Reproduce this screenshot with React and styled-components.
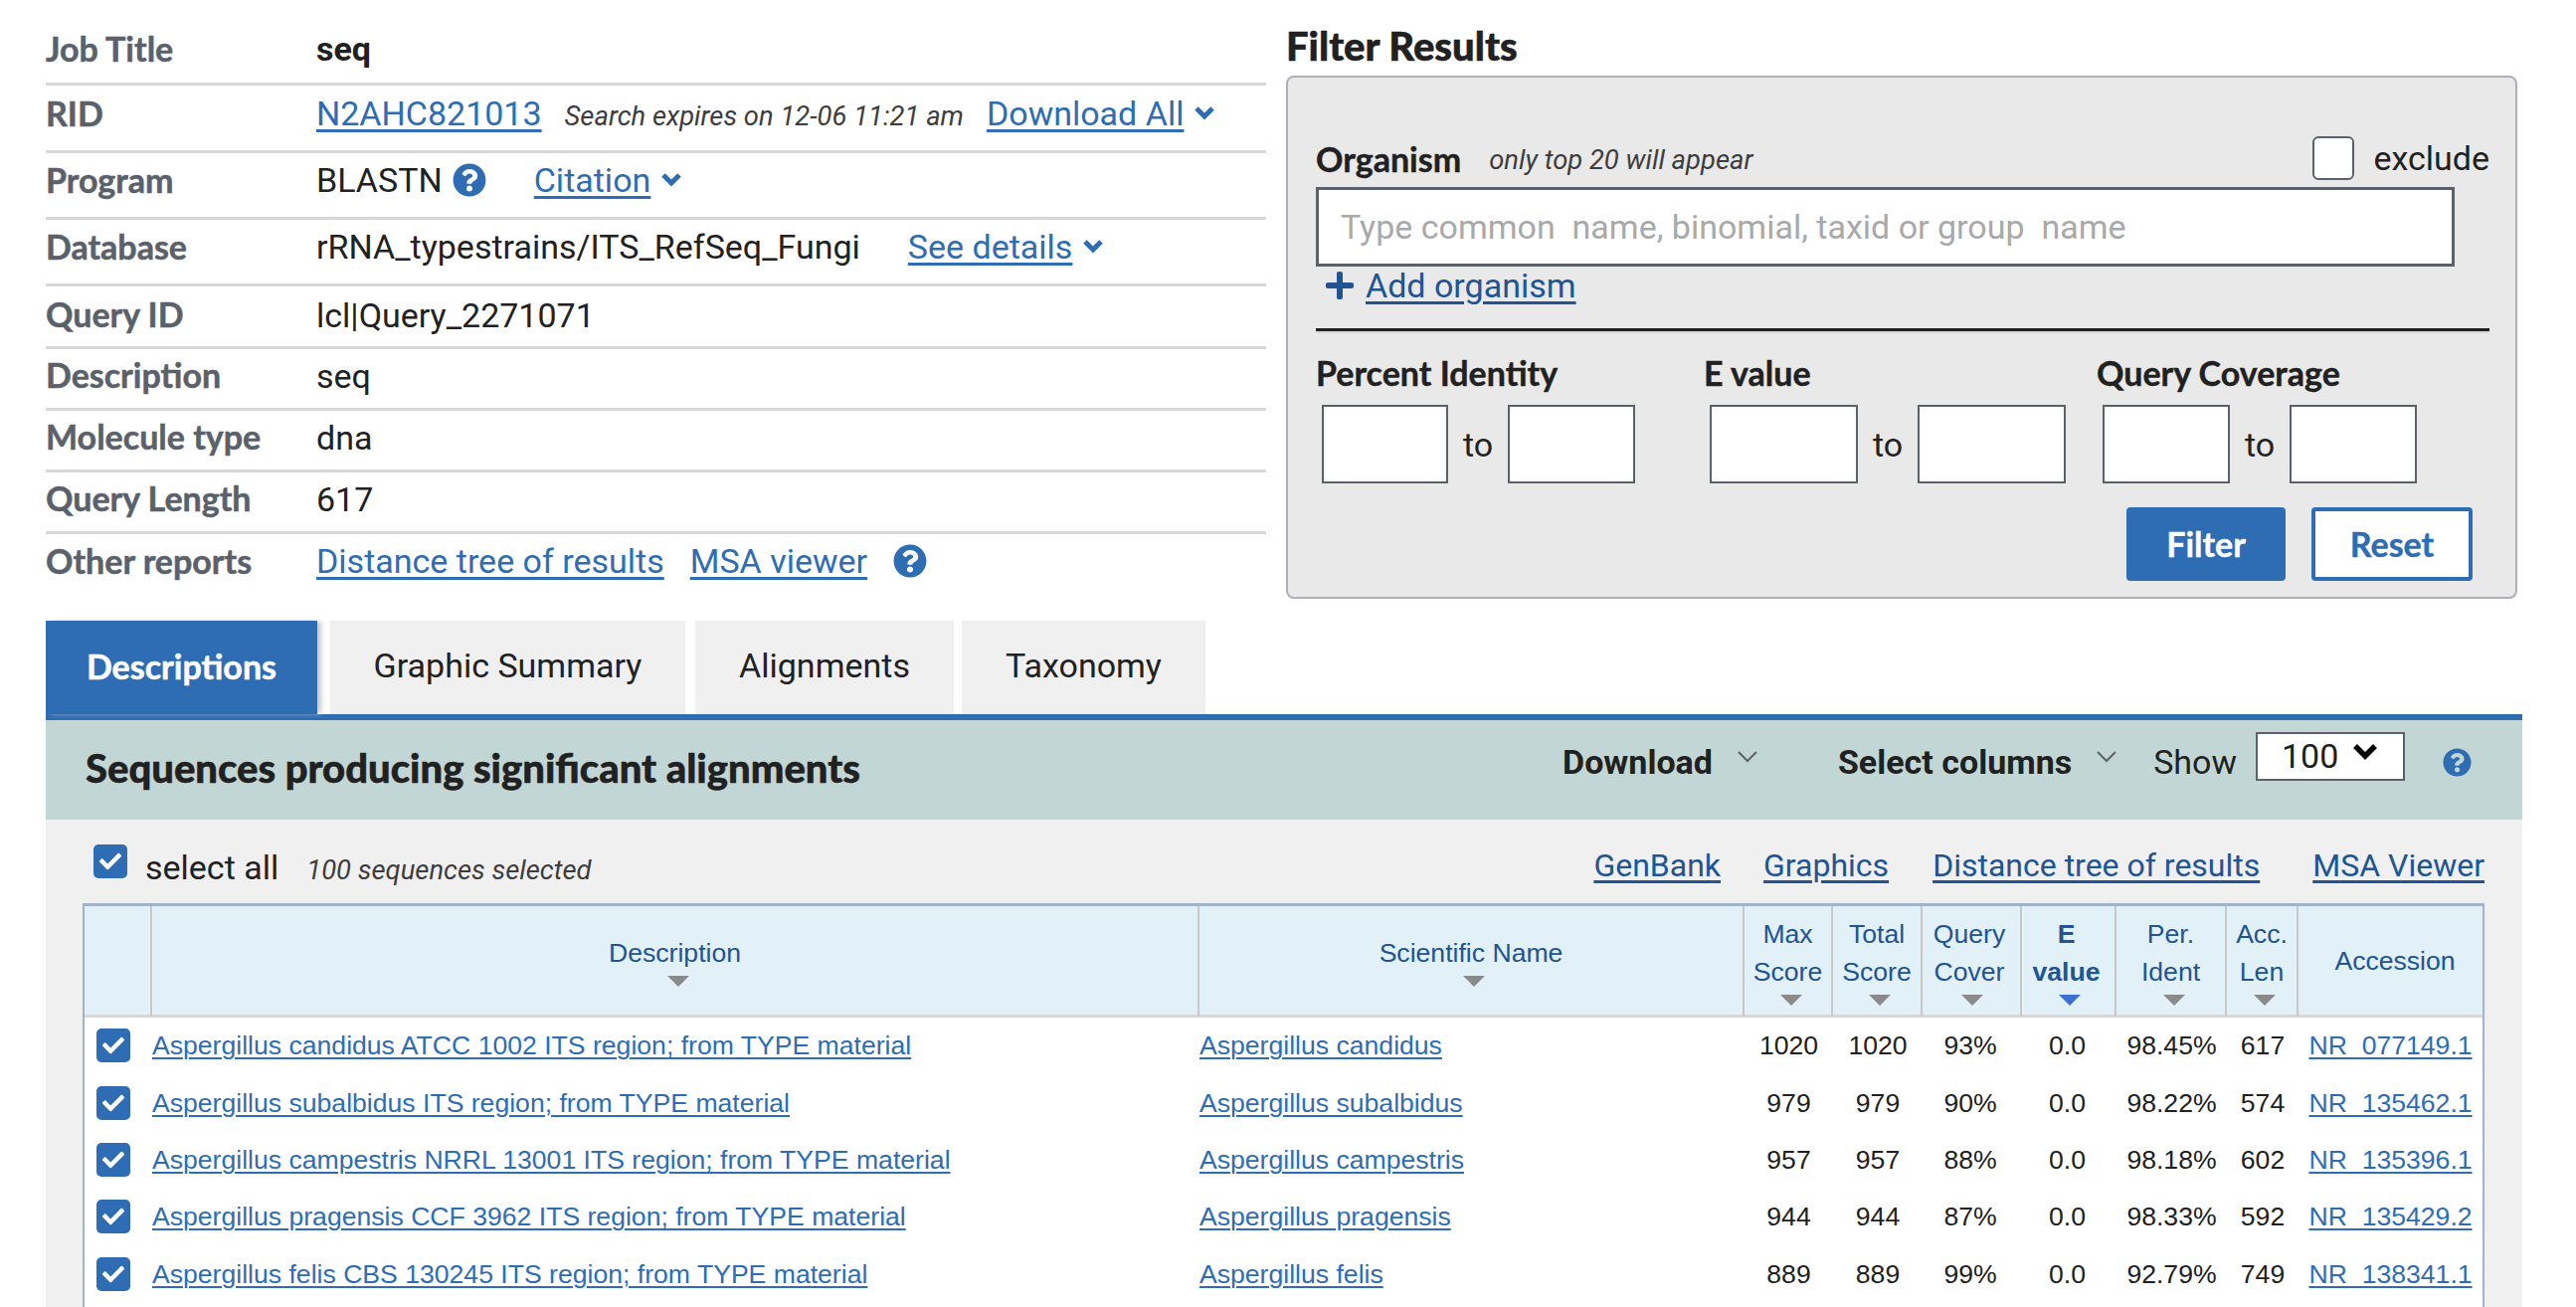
import React from 'react';
import styled, { createGlobalStyle } from 'styled-components';
import { FaQuestionCircle, FaPlus, FaCheck } from 'react-icons/fa';

const HEAD_FONT = '"Lato", "Noto Sans", sans-serif';
const BODY_FONT = 'Roboto, "Liberation Sans", sans-serif';
const BLUE = '#2e6db4';

const Global = createGlobalStyle`
  html, body { margin: 0; padding: 0; background: #fff; overflow: hidden; }
  body { font-family: ${BODY_FONT}; color: #212121; }
  * { box-sizing: border-box; }
`;

const Page = styled.div`
  width: 2590px;
  height: 1314px;
  overflow: hidden;
  padding: 18px 54px 0 46px;
`;

const Top = styled.div`
  display: flex;
  height: 606px;
`;

const Summary = styled.div`
  width: 1227px;
  margin-right: 20px;
`;

const Row = styled.div`
  display: flex;
  align-items: center;
  height: ${p => p.$h}px;
  padding-bottom: ${p => p.$pb || 0}px;
  border-bottom: ${p => (p.$last ? 'none' : '3px solid #d6d7d9')};
  font-size: 34px;
`;

const Label = styled.div`
  width: 272px;
  padding-bottom: 5px;
  font-family: ${HEAD_FONT};
  font-weight: 700;
  font-size: 34px;
  -webkit-text-stroke: 0.5px #5b616b;
  color: #5b616b;
`;

const Value = styled.div`
  display: flex;
  align-items: center;
  padding-bottom: 3px;
  font-weight: ${p => (p.$bold ? 700 : 400)};
`;

const A = styled.a`
  color: ${BLUE};
  text-decoration: underline;
  text-decoration-thickness: 3px;
  text-underline-offset: 4px;
  margin-left: ${p => p.$ml || 0}px;
`;

const Note = styled.span`
  font-style: italic;
  font-size: 27.4px;
  color: #3d3d3d;
  margin-left: ${p => p.$ml || 0}px;
  margin-top: ${p => p.$mt || 0}px;
`;

const ChevSvg = styled.svg`
  width: ${p => p.$w || 22}px;
  height: 16px;
  margin-left: 10px;
  fill: none;
  stroke: ${BLUE};
  stroke-width: 5;
`;

const Chev = () => (
  <ChevSvg viewBox="0 0 22 16"><path d="M3 3l8 8 8-8" /></ChevSvg>
);

const Help = styled(FaQuestionCircle)`
  color: ${BLUE};
  width: ${p => p.$size || 34}px;
  height: ${p => p.$size || 34}px;
  margin-left: ${p => p.$ml || 0}px;
  margin-bottom: ${p => p.$mb || 0}px;
`;

const FilterCol = styled.div`
  width: 1238px;
`;

const FilterTitle = styled.div`
  height: 58px;
  line-height: 57px;
  font-family: ${HEAD_FONT};
  font-weight: 900;
  font-size: 40px;
  -webkit-text-stroke: 0.5px #212121;
  color: #212121;
`;

const Panel = styled.div`
  height: 526px;
  background: #e9e9e9;
  border: 2px solid #aeb0b5;
  border-radius: 8px;
  padding: 59px 26px 16px 28px;
`;

const OrganismRow = styled.div`
  display: flex;
  align-items: center;
  height: 44px;
`;

const FieldLabel = styled.span`
  font-family: ${HEAD_FONT};
  font-weight: 700;
  font-size: 34px;
  -webkit-text-stroke: 0.4px #212121;
  color: #212121;
`;

const Exclude = styled.label`
  display: flex;
  align-items: center;
  margin-left: auto;
  font-size: 34px;
`;

const Box = styled.span`
  width: 42px;
  height: 44px;
  background: #fff;
  border: 2px solid #5b616b;
  border-radius: 6px;
  margin-right: 19px;
`;

const OrganismInput = styled.div`
  width: 1145px;
  height: 80px;
  margin-top: 7px;
  padding-left: 22px;
  display: flex;
  align-items: center;
  background: #fff;
  border: 3px solid #5b616b;
  color: #a9a9a9;
  font-size: 34px;
  white-space: pre;
`;

const AddRow = styled.div`
  display: flex;
  align-items: center;
  height: 40px;
  padding: 0 0 2px 8px;
  font-size: 34px;
`;

const AddLink = styled(A)`
  color: #205493;
  margin-left: 10px;
`;

const Plus = styled(FaPlus)`
  color: #205493;
  width: 32px;
  height: 32px;
`;

const Divider = styled.div`
  height: 5px;
  margin-top: 22px;
  border-top: 3px solid #212121;
  background: #d6d7d9;
`;

const Ranges = styled.div`
  display: grid;
  grid-template-columns: 390px 395px 1fr;
  margin-top: 24px;
`;

const RangeLabel = styled.div`
  height: 32px;
  line-height: 32px;
  margin-bottom: 16px;
`;

const RangeInputs = styled.div`
  display: flex;
  align-items: center;
  padding-left: 6px;
  font-size: 34px;
`;

const SmallInput = styled.div`
  width: ${p => p.$w}px;
  height: 79px;
  background: #fff;
  border: 2px solid #5b616b;
`;

const To = styled.span`
  width: 60px;
  padding-left: 15px;
`;

const Buttons = styled.div`
  display: flex;
  justify-content: flex-end;
  gap: 26px;
  margin-top: 24px;
  padding-right: 17px;
`;

const Btn = styled.div`
  width: ${p => (p.$solid ? 160 : 162)}px;
  height: 74px;
  padding-bottom: 2px;
  display: flex;
  align-items: center;
  justify-content: center;
  font-family: ${HEAD_FONT};
  font-weight: 700;
  font-size: 34px;
  -webkit-text-stroke: 0.4px ${p => (p.$solid ? '#fff' : BLUE)};
  border-radius: 4px;
  background: ${p => (p.$solid ? BLUE : '#fff')};
  color: ${p => (p.$solid ? '#fff' : BLUE)};
  border: 4px solid ${BLUE};
`;

const Tabs = styled.div`
  display: flex;
  height: 94px;
`;

const Tab = styled.div`
  width: ${p => p.$w}px;
  margin-right: ${p => p.$mr}px;
  display: flex;
  align-items: center;
  justify-content: center;
  padding-bottom: 4px;
  font-size: 34px;
  background: ${p => (p.$active ? BLUE : '#f0f0f0')};
  color: ${p => (p.$active ? '#fff' : '#212121')};
  font-family: ${p => (p.$active ? HEAD_FONT : BODY_FONT)};
  font-weight: ${p => (p.$active ? 700 : 400)};
  -webkit-text-stroke: ${p => (p.$active ? '0.5px #fff' : '0')};
  box-shadow: ${p => (p.$active ? '5px 0 5px -1px #c8c8c8' : 'none')};
`;

const Banner = styled.div`
  display: flex;
  align-items: center;
  height: 106px;
  padding: 0 40px 4px 40px;
  border-top: 6px solid ${BLUE};
  background: #c2d7d5;
`;

const BannerTitle = styled.div`
  font-family: ${HEAD_FONT};
  font-weight: 900;
  font-size: 40px;
  -webkit-text-stroke: 0.5px #212121;
  color: #212121;
`;

const Menu = styled.div`
  display: flex;
  align-items: center;
  font-weight: 700;
  font-size: 34px;
  color: #212121;
  margin-left: ${p => p.$ml}px;
  padding-bottom: 12px;
`;

const ThinChev = styled.svg`
  width: 20px;
  height: 12px;
  margin-left: 25px;
  margin-bottom: 10px;
  fill: none;
  stroke: #5b616b;
  stroke-width: 2;
`;

const Show = styled.span`
  font-size: 34px;
  margin-left: 37px;
  padding-bottom: 12px;
`;

const Select = styled.div`
  width: 150px;
  height: 49px;
  margin-left: 19px;
  margin-bottom: 24px;
  padding-left: 24px;
  display: flex;
  align-items: center;
  background: #fff;
  border: 2px solid #5b616b;
  font-size: 34px;
`;

const SelectChevSvg = styled.svg`
  width: 26px;
  height: 18px;
  margin: 0 0 8px 14px;
  fill: none;
  stroke: #000;
  stroke-width: 5.5;
`;

const Results = styled.div`
  height: 500px;
  background: #f0f0f0;
  padding: 16px 38px 0 37px;
`;

const Toolbar = styled.div`
  display: flex;
  align-items: center;
  height: 68px;
  padding-left: 11px;
`;

const Check = styled.span`
  display: inline-flex;
  align-items: center;
  justify-content: center;
  width: 34px;
  height: 34px;
  background: ${BLUE};
  border-radius: 5px;
  color: #fff;
  flex-shrink: 0;
  margin-bottom: ${p => p.$mb || 0}px;
  margin-right: ${p => p.$mr || 0}px;
  svg { width: 22px; height: 22px; }
`;

const SelectAll = styled.span`
  font-size: 34px;
  margin-left: 18px;
  padding-bottom: 5px;
`;

const ToolLinks = styled.div`
  display: flex;
  margin-left: auto;
  padding-bottom: 8px;
  font-size: 32px;
`;

const ToolLink = styled(A)`
  color: #205493;
  margin-left: ${p => p.$ml || 0}px;
`;

const Table = styled.table`
  width: 2415px;
  table-layout: fixed;
  border-collapse: separate;
  border-spacing: 0;
  background: #fff;
  border-left: 2px solid #9fb3cc;
  border-right: 2px solid #9fb3cc;
  border-top: 3px solid #9fb3cc;
  font-family: "Liberation Sans", Arial, sans-serif;
  font-size: 26.6px;
`;

const Th = styled.th`
  height: 112px;
  padding: 0 ${p => p.$pr || 0}px 0 ${p => p.$pl || 0}px;
  font-weight: ${p => (p.$bold ? 700 : 400)};
  line-height: 38px;
  text-align: center;
  vertical-align: middle;
  color: #205493;
  background: #e2f0f7;
  border-bottom: 3px solid #d6d7d9;
  border-right: ${p => (p.$end ? 'none' : '2px solid #c8c8c8')};
`;

const SortArrow = styled.span`
  display: block;
  width: 0;
  height: 0;
  margin: 4px auto 0;
  transform: translateX(3px);
  border-left: 11px solid transparent;
  border-right: 11px solid transparent;
  border-top: 11px solid ${p => (p.$on ? '#3f6fd0' : '#8a8a8a')};
`;

const Td = styled.td`
  height: 57.4px;
  padding: 0 ${p => p.$pr || 0}px 0 0;
  text-align: ${p => p.$align || 'center'};
  white-space: nowrap;
  overflow: hidden;
`;

const RowLink = styled.a`
  color: ${BLUE};
  text-decoration: underline;
  text-decoration-thickness: 2px;
  text-underline-offset: 3px;
`;

const ROWS = [
  ['Aspergillus candidus ATCC 1002 ITS region; from TYPE material', 'Aspergillus candidus', '1020', '93%', '98.45%', '617', 'NR_077149.1'],
  ['Aspergillus subalbidus ITS region; from TYPE material', 'Aspergillus subalbidus', '979', '90%', '98.22%', '574', 'NR_135462.1'],
  ['Aspergillus campestris NRRL 13001 ITS region; from TYPE material', 'Aspergillus campestris', '957', '88%', '98.18%', '602', 'NR_135396.1'],
  ['Aspergillus pragensis CCF 3962 ITS region; from TYPE material', 'Aspergillus pragensis', '944', '87%', '98.33%', '592', 'NR_135429.2'],
  ['Aspergillus felis CBS 130245 ITS region; from TYPE material', 'Aspergillus felis', '889', '99%', '92.79%', '749', 'NR_138341.1'],
];

const COLS = [68, 1053, 548, 89, 90, 100, 95, 111, 72, 185];

const Header = ({ lines, on, bold, end, noArrow, pr, pl }) => (
  <Th $bold={bold} $end={end} $pr={pr} $pl={pl}>
    {lines.map(l => <div key={l}>{l}</div>)}
    {!noArrow && <SortArrow $on={on} />}
  </Th>
);

const App = () => (
  <Page>
    <Global />
    <Top>
      <Summary>
        <Row $h={68}><Label>Job Title</Label><Value $bold>seq</Value></Row>
        <Row $h={68} $pb={6}>
          <Label>RID</Label>
          <Value>
            <A>N2AHC821013</A>
            <Note $ml={23} $mt={5}>Search expires on 12-06 11:21 am</Note>
            <A $ml={23}>Download All</A><Chev />
          </Value>
        </Row>
        <Row $h={67} $pb={7}>
          <Label>Program</Label>
          <Value>BLASTN<Help $ml={10} /><A $ml={48}>Citation</A><Chev /></Value>
        </Row>
        <Row $h={67} $pb={7}>
          <Label>Database</Label>
          <Value>rRNA_typestrains/ITS_RefSeq_Fungi<A $ml={48}>See details</A><Chev /></Value>
        </Row>
        <Row $h={63}><Label>Query ID</Label><Value>lcl|Query_2271071</Value></Row>
        <Row $h={62} $pb={3}><Label>Description</Label><Value>seq</Value></Row>
        <Row $h={62} $pb={3}><Label>Molecule type</Label><Value>dna</Value></Row>
        <Row $h={62} $pb={3}><Label>Query Length</Label><Value>617</Value></Row>
        <Row $h={62} $pb={5} $last>
          <Label>Other reports</Label>
          <Value><A>Distance tree of results</A><A $ml={26}>MSA viewer</A><Help $ml={26} /></Value>
        </Row>
      </Summary>

      <FilterCol>
        <FilterTitle>Filter Results</FilterTitle>
        <Panel>
          <OrganismRow>
            <FieldLabel>Organism</FieldLabel>
            <Note $ml={28} $mt={3}>only top 20 will appear</Note>
            <Exclude><Box />exclude</Exclude>
          </OrganismRow>
          <OrganismInput>Type common  name, binomial, taxid or group  name</OrganismInput>
          <AddRow><Plus /><AddLink>Add organism</AddLink></AddRow>
          <Divider />
          <Ranges>
            <div>
              <RangeLabel><FieldLabel>Percent Identity</FieldLabel></RangeLabel>
              <RangeInputs><SmallInput $w={127} /><To>to</To><SmallInput $w={128} /></RangeInputs>
            </div>
            <div>
              <RangeLabel><FieldLabel>E value</FieldLabel></RangeLabel>
              <RangeInputs><SmallInput $w={149} /><To>to</To><SmallInput $w={149} /></RangeInputs>
            </div>
            <div>
              <RangeLabel><FieldLabel>Query Coverage</FieldLabel></RangeLabel>
              <RangeInputs><SmallInput $w={128} /><To>to</To><SmallInput $w={128} /></RangeInputs>
            </div>
          </Ranges>
          <Buttons>
            <Btn $solid>Filter</Btn>
            <Btn>Reset</Btn>
          </Buttons>
        </Panel>
      </FilterCol>
    </Top>

    <Tabs>
      <Tab $active $w={273} $mr={13}>Descriptions</Tab>
      <Tab $w={357} $mr={10}>Graphic Summary</Tab>
      <Tab $w={260} $mr={8}>Alignments</Tab>
      <Tab $w={245} $mr={0}>Taxonomy</Tab>
    </Tabs>

    <Banner>
      <BannerTitle>Sequences producing significant alignments</BannerTitle>
      <Menu $ml={706}>Download<ThinChev viewBox="0 0 20 12"><path d="M1 1l9 9 9-9" /></ThinChev></Menu>
      <Menu $ml={81}>Select columns<ThinChev viewBox="0 0 20 12"><path d="M1 1l9 9 9-9" /></ThinChev></Menu>
      <Show>Show</Show>
      <Select>100<SelectChevSvg viewBox="0 0 26 18"><path d="M3 3l10 10 10-10" /></SelectChevSvg></Select>
      <Help $size={29} $ml={38} $mb={12} />
    </Banner>

    <Results>
      <Toolbar>
        <Check $mb={16}><FaCheck /></Check>
        <SelectAll>select all</SelectAll>
        <Note $ml={28} $mt={2}>100 sequences selected</Note>
        <ToolLinks>
          <ToolLink>GenBank</ToolLink>
          <ToolLink $ml={43}>Graphics</ToolLink>
          <ToolLink $ml={44}>Distance tree of results</ToolLink>
          <ToolLink $ml={53}>MSA Viewer</ToolLink>
        </ToolLinks>
      </Toolbar>
      <Table>
        <colgroup>{COLS.map((w, i) => <col key={i} width={w} />)}</colgroup>
        <thead>
          <tr>
            <Header lines={[]} noArrow />
            <Header lines={['Description']} />
            <Header lines={['Scientific Name']} />
            <Header lines={['Max', 'Score']} />
            <Header lines={['Total', 'Score']} />
            <Header lines={['Query', 'Cover']} pr={4} />
            <Header lines={['E', 'value']} on bold pr={4} />
            <Header lines={['Per.', 'Ident']} />
            <Header lines={['Acc.', 'Len']} />
            <Header lines={['Accession']} noArrow end pl={9} />
          </tr>
        </thead>
        <tbody>
          {ROWS.map(([desc, name, score, cover, ident, len, acc]) => (
            <tr key={acc}>
              <Td><Check $mr={10}><FaCheck /></Check></Td>
              <Td $align="left"><RowLink>{desc}</RowLink></Td>
              <Td $align="left"><RowLink>{name}</RowLink></Td>
              <Td>{score}</Td>
              <Td>{score}</Td>
              <Td $pr={4}>{cover}</Td>
              <Td $pr={4}>0.0</Td>
              <Td>{ident}</Td>
              <Td>{len}</Td>
              <Td><RowLink>{acc}</RowLink></Td>
            </tr>
          ))}
          <tr><Td colSpan={10} /></tr>
        </tbody>
      </Table>
    </Results>
  </Page>
);

export default App;
